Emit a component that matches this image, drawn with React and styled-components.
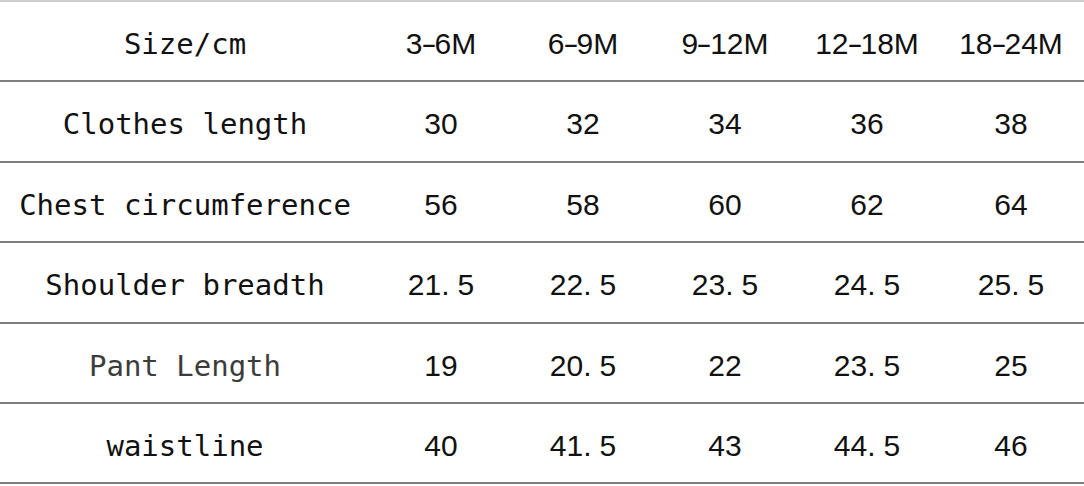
import React from "react";
import styled, { createGlobalStyle } from "styled-components";

const Global = createGlobalStyle`
  html, body { margin: 0; padding: 0; background: #ffffff; }
  body { font-family: "Liberation Sans", Arial, sans-serif; }
`;

const Table = styled.div`
  width: 1084px;
  display: flex;
  flex-direction: column;
  border-top: 2px solid #cdcdcd;
`;

const Row = styled.div`
  box-sizing: border-box;
  display: grid;
  grid-template-columns: 370px repeat(4, 142px) 1fr;
  align-items: center;
  height: ${(p) => p.$h}px;
  padding-top: 5px;
  border-bottom: 2px solid #7e7e7e;
`;

const Label = styled.div`
  text-align: center;
  font-family: "DejaVu Sans Mono", "Liberation Mono", monospace;
  font-size: 29px;
  line-height: 30px;
  color: ${(p) => (p.$muted ? "#3c3c3c" : "#111111")};
`;

const Cell = styled.div`
  text-align: center;
  font-family: "Liberation Sans", Arial, sans-serif;
  font-size: 30px;
  line-height: 30px;
  color: #111111;
`;

const Dot = styled.span`
  margin-right: 8px;
`;

const Dash = styled.span`
  display: inline-block;
  transform: scaleX(1.55);
  margin: 0 1px;
`;

const header = ["3-6M", "6-9M", "9-12M", "12-18M", "18-24M"];

const rows = [
  { label: "Clothes length", values: ["30", "32", "34", "36", "38"], h: 81 },
  { label: "Chest circumference", values: ["56", "58", "60", "62", "64"], h: 80 },
  { label: "Shoulder breadth", values: ["21.5", "22.5", "23.5", "24.5", "25.5"], h: 81 },
  { label: "Pant Length", values: ["19", "20.5", "22", "23.5", "25"], h: 80, muted: true },
  { label: "waistline", values: ["40", "41.5", "43", "44.5", "46"], h: 80 },
];

function Num({ v }) {
  const i = v.indexOf(".");
  if (i < 0) return v;
  return (
    <>
      {v.slice(0, i)}
      <Dot>.</Dot>
      {v.slice(i + 1)}
    </>
  );
}

function Range({ v }) {
  const [a, b] = v.split("-");
  return (
    <>
      {a}
      <Dash>-</Dash>
      {b}
    </>
  );
}

export default function App() {
  return (
    <>
      <Global />
      <Table>
        <Row $h={80}>
          <Label>Size/cm</Label>
          {header.map((h) => (
            <Cell key={h}>
              <Range v={h} />
            </Cell>
          ))}
        </Row>
        {rows.map((r) => (
          <Row key={r.label} $h={r.h}>
            <Label $muted={r.muted}>{r.label}</Label>
            {r.values.map((v, i) => (
              <Cell key={i}>
                <Num v={v} />
              </Cell>
            ))}
          </Row>
        ))}
      </Table>
    </>
  );
}
